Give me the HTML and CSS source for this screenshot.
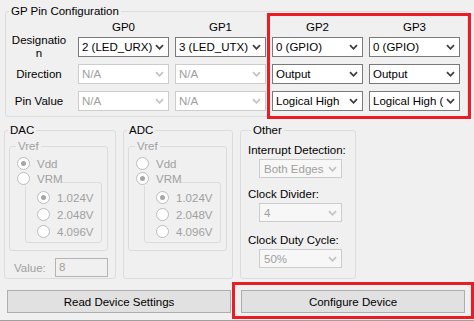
FILE: index.html
```html
<!DOCTYPE html>
<html lang="en">
<head>
    <meta charset="UTF-8">
    <meta name="viewport" content="width=device-width, initial-scale=1.0">
    <title>GP Pin Configuration</title>
    <link rel="stylesheet" href="styles.css">
</head>
<body>
    <div class="window">
        <fieldset class="group pins">
            <legend>GP Pin Configuration</legend>
            <div class="pin-grid">
                <div></div>
                <div class="col-head">GP0</div>
                <div class="col-head">GP1</div>
                <div class="col-head">GP2</div>
                <div class="col-head">GP3</div>

                <div class="row-label">Designatio<br>n</div>
                <div class="combo"><span>2 (LED_URX)</span><svg class="chev" width="9" height="6" viewBox="0 0 9 6"><path d="M1 1.2 L4.5 4.8 L8 1.2"/></svg></div>
                <div class="combo"><span>3 (LED_UTX)</span><svg class="chev" width="9" height="6" viewBox="0 0 9 6"><path d="M1 1.2 L4.5 4.8 L8 1.2"/></svg></div>
                <div class="combo"><span>0 (GPIO)</span><svg class="chev" width="9" height="6" viewBox="0 0 9 6"><path d="M1 1.2 L4.5 4.8 L8 1.2"/></svg></div>
                <div class="combo"><span>0 (GPIO)</span><svg class="chev" width="9" height="6" viewBox="0 0 9 6"><path d="M1 1.2 L4.5 4.8 L8 1.2"/></svg></div>

                <div class="row-label">Direction</div>
                <div class="combo off"><span>N/A</span><svg class="chev" width="9" height="6" viewBox="0 0 9 6"><path d="M1 1.2 L4.5 4.8 L8 1.2"/></svg></div>
                <div class="combo off"><span>N/A</span><svg class="chev" width="9" height="6" viewBox="0 0 9 6"><path d="M1 1.2 L4.5 4.8 L8 1.2"/></svg></div>
                <div class="combo"><span>Output</span><svg class="chev" width="9" height="6" viewBox="0 0 9 6"><path d="M1 1.2 L4.5 4.8 L8 1.2"/></svg></div>
                <div class="combo"><span>Output</span><svg class="chev" width="9" height="6" viewBox="0 0 9 6"><path d="M1 1.2 L4.5 4.8 L8 1.2"/></svg></div>

                <div class="row-label">Pin Value</div>
                <div class="combo off"><span>N/A</span><svg class="chev" width="9" height="6" viewBox="0 0 9 6"><path d="M1 1.2 L4.5 4.8 L8 1.2"/></svg></div>
                <div class="combo off"><span>N/A</span><svg class="chev" width="9" height="6" viewBox="0 0 9 6"><path d="M1 1.2 L4.5 4.8 L8 1.2"/></svg></div>
                <div class="combo"><span>Logical High</span><svg class="chev" width="9" height="6" viewBox="0 0 9 6"><path d="M1 1.2 L4.5 4.8 L8 1.2"/></svg></div>
                <div class="combo"><span>Logical High (</span><svg class="chev" width="9" height="6" viewBox="0 0 9 6"><path d="M1 1.2 L4.5 4.8 L8 1.2"/></svg></div>
            </div>
        </fieldset>

        <div class="lower">
            <fieldset class="group dac">
                <legend>DAC</legend>
                <fieldset class="group vref">
                    <legend>Vref</legend>
                    <div class="radio-row"><span class="radio on"></span>Vdd</div>
                    <div class="radio-row over"><span class="radio"></span>VRM</div>
                    <div class="vrm-box">
                        <div class="radio-row tall"><span class="radio on"></span>1.024V</div>
                        <div class="radio-row tall"><span class="radio"></span>2.048V</div>
                        <div class="radio-row tall"><span class="radio"></span>4.096V</div>
                    </div>
                </fieldset>
                <div class="value-row">
                    <span class="value-label">Value:</span>
                    <span class="value-box">8</span>
                </div>
            </fieldset>

            <fieldset class="group adc">
                <legend>ADC</legend>
                <fieldset class="group vref">
                    <legend>Vref</legend>
                    <div class="radio-row"><span class="radio"></span>Vdd</div>
                    <div class="radio-row over"><span class="radio on"></span>VRM</div>
                    <div class="vrm-box">
                        <div class="radio-row tall"><span class="radio on"></span>1.024V</div>
                        <div class="radio-row tall"><span class="radio"></span>2.048V</div>
                        <div class="radio-row tall"><span class="radio"></span>4.096V</div>
                    </div>
                </fieldset>
            </fieldset>

            <fieldset class="group other">
                <legend>Other</legend>
                <div class="field-label first">Interrupt Detection:</div>
                <div class="combo off small"><span>Both Edges</span><svg class="chev" width="9" height="6" viewBox="0 0 9 6"><path d="M1 1.2 L4.5 4.8 L8 1.2"/></svg></div>
                <div class="field-label">Clock Divider:</div>
                <div class="combo off small"><span>4</span><svg class="chev" width="9" height="6" viewBox="0 0 9 6"><path d="M1 1.2 L4.5 4.8 L8 1.2"/></svg></div>
                <div class="field-label last">Clock Duty Cycle:</div>
                <div class="combo off small"><span>50%</span><svg class="chev" width="9" height="6" viewBox="0 0 9 6"><path d="M1 1.2 L4.5 4.8 L8 1.2"/></svg></div>
            </fieldset>
        </div>

        <div class="actions">
            <button class="btn">Read Device Settings</button>
            <button class="btn">Configure Device</button>
        </div>

        <div class="mark mark-pins"></div>
        <div class="mark mark-config"></div>
    </div>
</body>
</html>
```

FILE: styles.css
```css
* {
    margin: 0;
    padding: 0;
    box-sizing: border-box;
}

body {
    font-family: 'Liberation Sans', Arial, sans-serif;
    font-size: 11.5px;
    color: #000;
    background: #f0f0f0;
    overflow: hidden;
}

.window {
    position: relative;
    width: 474px;
    height: 321px;
    padding-top: 3px;
    border-bottom: 1px solid #a0a0a0;
}

/* group boxes */
.group {
    border: 1px solid #dcdcdc;
    border-radius: 3px;
    min-inline-size: 0;
}

.group > legend {
    line-height: 16px;
    padding: 0 2px;
    margin-left: 3px;
}

.pins {
    margin-left: 5px;
    width: 463px;
    padding: 0 6px 5px 0;
}

.pin-grid {
    display: grid;
    grid-template-columns: 66px repeat(4, 91px);
    grid-template-rows: 18px 27px 27px 20px;
    column-gap: 6px;
}

.col-head {
    text-align: center;
    line-height: 16px;
}

.row-label {
    height: 20px;
    display: flex;
    align-items: center;
    justify-content: center;
    text-align: center;
    line-height: 13px;
}

/* combo boxes */
.combo {
    height: 20px;
    display: flex;
    align-items: center;
    gap: 2px;
    padding: 0 4px 0 3px;
    background: #fff;
    border: 1px solid #7a7a7a;
    white-space: nowrap;
}

.combo span {
    flex: 1;
    overflow: hidden;
}

.chev {
    flex: none;
    fill: none;
    stroke: #3c3c3c;
    stroke-width: 1.7;
}

.combo.off {
    border-color: #cccccc;
    color: #a0a0a0;
}

.combo.off .chev {
    stroke: #c2c2c2;
}

.combo.small {
    width: 83px;
    height: 19px;
    margin: 2px 0 0 11px;
    padding-left: 4px;
    gap: 1px;
    background: #f7f7f7;
}

/* lower groups */
.lower {
    display: flex;
    gap: 7px;
    margin: 5px 0 0 4px;
}

.dac {
    width: 112px;
    padding-bottom: 1px;
}

.adc {
    width: 110px;
}

.other {
    width: 116px;
    padding-left: 7px;
}

.vref {
    width: 99px;
    margin-left: 4px;
    padding: 2px 0 7px 0;
    color: #a0a0a0;
}

.vref > legend {
    margin-left: 6px;
}

.radio-row {
    height: 15px;
    display: flex;
    align-items: center;
    padding-left: 7px;
    color: #a0a0a0;
}

.radio-row.over {
    position: relative;
    z-index: 1;
    width: 52px;
    background: #f0f0f0;
}

.radio-row.tall {
    height: 17px;
    padding-left: 11px;
}

.radio {
    position: relative;
    flex: none;
    width: 13px;
    height: 13px;
    margin-right: 7px;
    border: 1px solid #bcbcbc;
    border-radius: 50%;
    background: #fff;
}

.radio.on::after {
    content: "";
    position: absolute;
    left: 3px;
    top: 3px;
    width: 5px;
    height: 5px;
    border-radius: 50%;
    background: #a6a6a6;
}

.vrm-box {
    width: 77px;
    margin: -4px 0 0 15px;
    padding: 6px 0 2px 0;
    border: 1px solid #dcdcdc;
    border-radius: 3px;
}

.value-row {
    display: flex;
    align-items: center;
    margin-top: 7px;
    padding-left: 9px;
    color: #a0a0a0;
}

.value-label {
    width: 41px;
}

.value-box {
    width: 53px;
    height: 19px;
    line-height: 17px;
    padding-left: 3px;
    border: 1px solid #b4b4b4;
    background: #f0f0f0;
}

.field-label {
    line-height: 14px;
    margin-top: 9px;
}

.field-label.first {
    margin-top: 5px;
}

.field-label.last {
    margin-top: 11px;
}

/* buttons */
.actions {
    display: flex;
    gap: 10px;
    margin: 11px 0 0 7px;
}

.btn {
    width: 224px;
    height: 23px;
    font: inherit;
    color: #000;
    background: #e1e1e1;
    border: 1px solid #adadad;
}

/* red highlight marks */
.mark {
    position: absolute;
    border: 3px solid #ec1c24;
    pointer-events: none;
}

.mark-pins {
    left: 267px;
    top: 13px;
    width: 204px;
    height: 106px;
}

.mark-config {
    left: 232px;
    top: 282px;
    width: 242px;
    height: 37px;
}
```
